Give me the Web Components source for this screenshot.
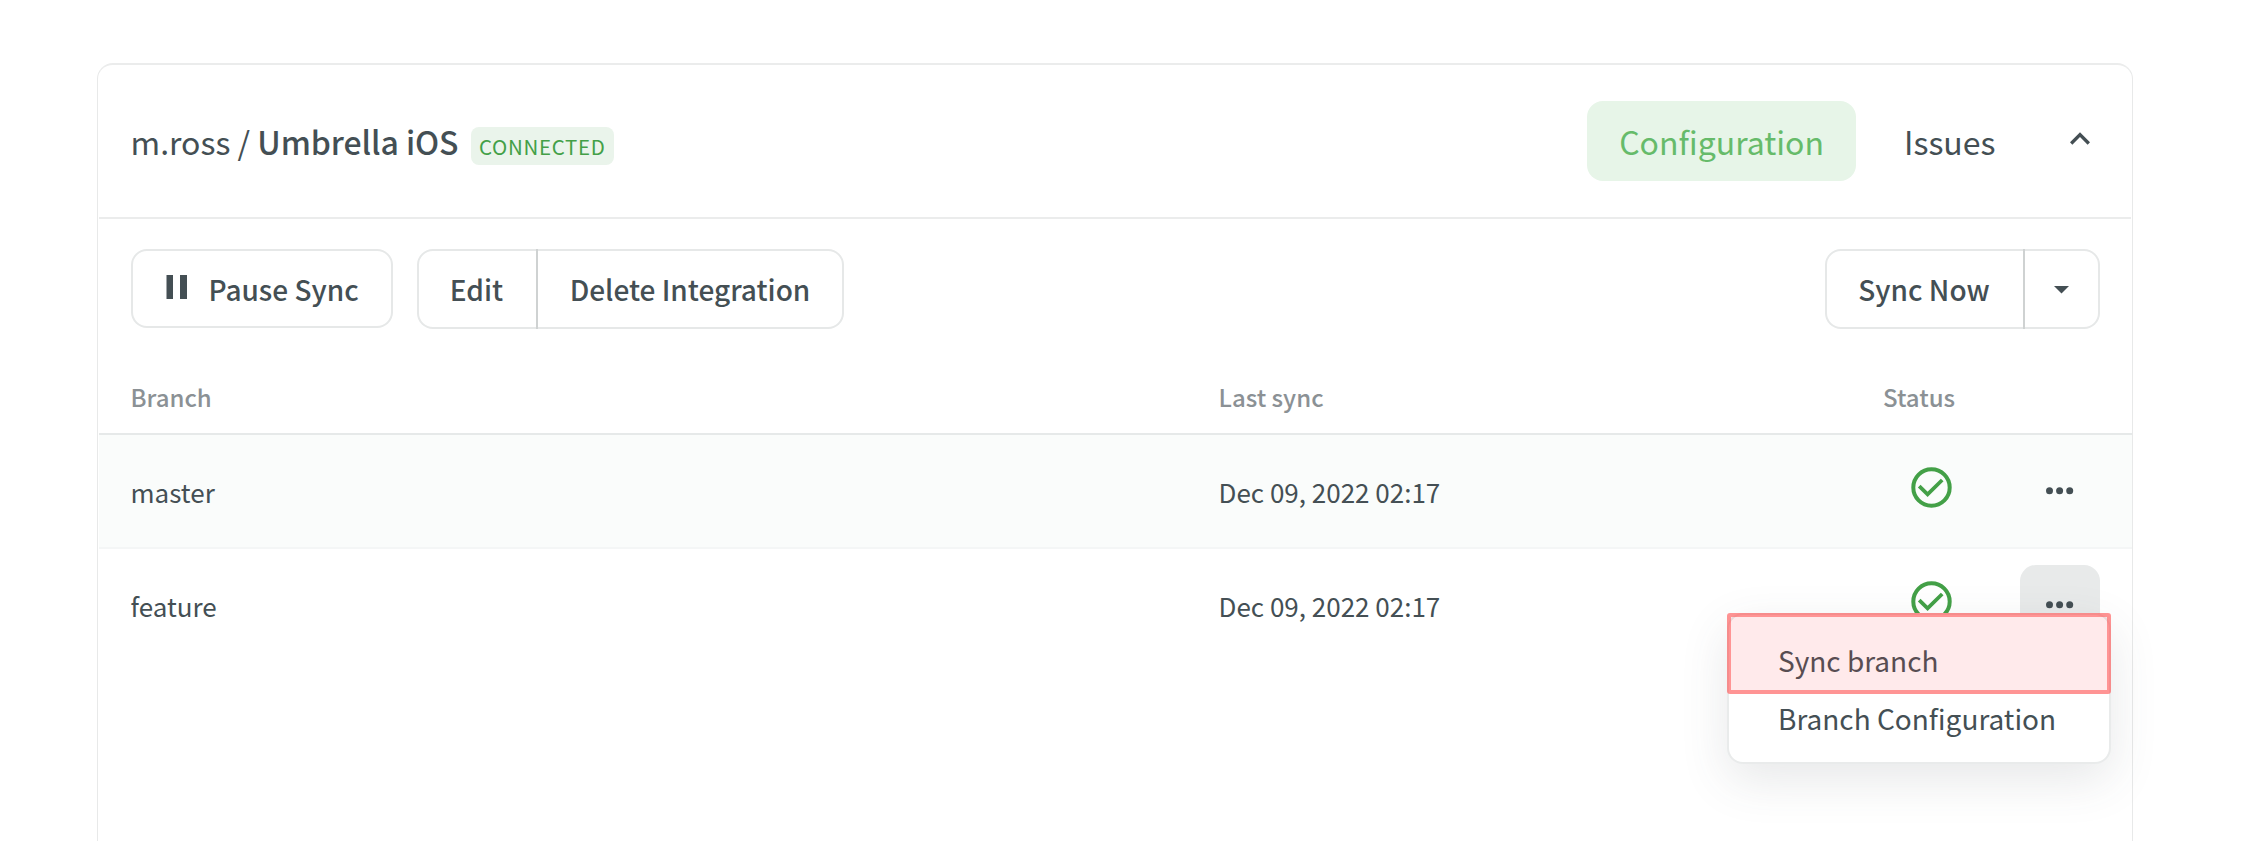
<!DOCTYPE html>
<html lang="en">
<head>
<meta charset="utf-8">
<title>Umbrella iOS integration</title>
<style>
  html, body { margin: 0; height: 841px; overflow: hidden; background: #fff; }
  body {
    font-family: "Noto Sans CJK SC", "Noto Sans", sans-serif;
    color: #444f54;
  }
</style>
</head>
<body>
<integration-card>
  <integration-header slot="header" owner="m.ross" name="Umbrella iOS" status="CONNECTED"></integration-header>
  <integration-toolbar slot="toolbar"></integration-toolbar>
  <branch-table slot="table">
    <branch-row name="master" synced="Dec 09, 2022 02:17" striped></branch-row>
    <branch-row name="feature" synced="Dec 09, 2022 02:17" open>
      <action-menu slot="menu">
        <menu-item highlighted>Sync branch</menu-item>
        <menu-item>Branch Configuration</menu-item>
      </action-menu>
    </branch-row>
  </branch-table>
</integration-card>

<script>
const define = (name, render) => customElements.define(name, class extends HTMLElement {
  constructor() { super(); this.attachShadow({ mode: 'open' }); }
  connectedCallback() { this.shadowRoot.innerHTML = render(this); }
});

define('integration-card', () => `
  <style>
    :host { display: block; padding: 63px 132px 0 97px; }
    .card {
      box-sizing: border-box; height: 778px;
      border: 1px solid #e8e9e9; border-top: 2px solid #ebecec; border-bottom: 0;
      border-radius: 16px 16px 0 0; background: #fff;
    }
  </style>
  <div class="card"><slot name="header"></slot><slot name="toolbar"></slot><slot name="table"></slot></div>`);

define('status-badge', () => `
  <style>
    :host {
      display: block; box-sizing: border-box; height: 38px; width: 143px; padding-left: 8px;
      border-radius: 8px; background: #eaf4eb; color: #43a047;
      font-size: 20.5px; line-height: 38px; letter-spacing: .68px;
    }
  </style><slot></slot>`);

define('tab-link', () => `
  <style>
    :host {
      display: block; box-sizing: border-box; height: 80px; padding: 0 32px;
      border-radius: 16px; font-size: 32px; line-height: 80px; white-space: nowrap;
    }
    :host([active]) { background: #e7f5e8; color: #66bb6a; }
  </style><slot></slot>`);

define('integration-header', el => `
  <style>
    :host {
      display: flex; align-items: center; box-sizing: border-box; height: 154px;
      padding: 0 32.5px 0 31.5px; margin: 0 1px 0 1px; border-bottom: 2px solid #ebecec;
    }
    .title { font-size: 32px; line-height: 48px; white-space: pre; }
    b { font-weight: 500; letter-spacing: -.08px; }
    status-badge { margin: 10px 0 0 12.5px; }
    nav { margin-left: auto; display: flex; align-items: center; gap: 16px; }
    svg { margin: -4px -1px 0 16px; display: block; }
  </style>
  <div class="title">${el.getAttribute('owner')} / <b>${el.getAttribute('name')}</b></div>
  <status-badge>${el.getAttribute('status')}</status-badge>
  <nav>
    <tab-link active>Configuration</tab-link>
    <tab-link>Issues</tab-link>
    <svg width="40" height="40" viewBox="0 0 24 24"><path d="M12 8l-6 6 1.41 1.41L12 10.83l4.59 4.58L18 14z" fill="#444f54"/></svg>
  </nav>`);

define('tool-button', () => `
  <style>
    :host {
      display: flex; align-items: center; box-sizing: border-box; height: 100%;
      font-size: 28px; font-weight: 500; line-height: 42px; white-space: nowrap;
    }
    :host(:not(:first-child)) { border-left: 2px solid #cfd2d2; }
  </style><slot></slot>`);

define('button-group', () => `
  <style>
    :host {
      display: flex; box-sizing: border-box; height: 80px;
      border-radius: 16px; box-shadow: inset 0 0 0 2px #e6e8e8;
    }
  </style><slot></slot>`);

define('integration-toolbar', () => `
  <style>
    :host { display: flex; box-sizing: border-box; height: 142px; padding: 30px 32.5px 32px 32.5px; }
    .pause { width: 262px; height: 79px; margin-right: 24.5px; }
    .pause tool-button { padding-left: 35px; }
    .pause svg { margin: -3px 21px 0 0; }
    .edit { width: 427px; }
    .sync { width: 275px; margin-left: auto; }
    .edit tool-button:first-child { width: 119px; justify-content: center; }
    .edit tool-button:last-child { flex: 1; padding-right: 2px; justify-content: center; }
    .sync tool-button:first-child { width: 198px; padding-left: 1px; justify-content: center; }
    .sync tool-button:last-child { flex: 1; padding: 2px 2px 0 0; justify-content: center; }
  </style>
  <button-group class="pause"><tool-button>
    <svg width="22" height="24" viewBox="0 0 22 24" fill="#444f54"><path d="M.5 0H7V24H.5zM14 0H21V24H14z"/></svg><span>Pause Sync</span>
  </tool-button></button-group>
  <button-group class="edit"><tool-button>Edit</tool-button><tool-button>Delete Integration</tool-button></button-group>
  <button-group class="sync"><tool-button>Sync Now</tool-button><tool-button>
    <svg width="15" height="8" viewBox="0 0 15 8"><path d="M0 0H15L7.5 7.6z" fill="#444f54"/></svg>
  </tool-button></button-group>`);

define('branch-table', () => `
  <style>
    :host { display: block; }
    .head {
      display: grid; grid-template-columns: 1088px 664.5px 1fr; align-items: center;
      box-sizing: border-box; height: 74px; padding: 0 0 0 31.5px; margin-left: 1px;
      border-bottom: 2px solid #e6e9e9;
      color: #8b9195; font-size: 24px; font-weight: 500; line-height: 36px;
    }
  </style>
  <div class="head"><span>Branch</span><span>Last sync</span><span>Status</span></div>
  <slot></slot>`);

define('branch-row', el => `
  <style>
    :host {
      display: grid; grid-template-columns: 1088px 692.5px 109px 80px; align-items: center;
      box-sizing: border-box; height: 114px; padding: 0 0 2px 31.5px; margin-left: 1px;
      position: relative; font-size: 26px; line-height: 38px;
    }
    :host([striped]) { background: #fafcfb; border-bottom: 2px solid #f4f6f6; padding-bottom: 0; }
    span { padding-top: 2px; }
    .check { display: block; margin-top: -8px; }
    .more { display: grid; place-items: center; width: 80px; height: 80px; border-radius: 16px; }
    :host([open]) .more { background: #e8eaea; }
  </style>
  <span>${el.getAttribute('name')}</span>
  <span>${el.getAttribute('synced')}</span>
  <svg class="check" width="41" height="41" viewBox="0 0 41 41" fill="none" stroke="#43a047" stroke-width="4">
    <circle cx="20.5" cy="20.5" r="18.2"/><path d="M8.2 19.2 16.6 27.4 31.2 13" stroke-width="3.8"/>
  </svg>
  <div class="more"><svg width="28" height="8" viewBox="0 0 28 8" fill="#444f54">
    <circle cx="3.5" cy="3.8" r="3.5"/><circle cx="13.6" cy="3.8" r="3.5"/><circle cx="23.7" cy="3.8" r="3.5"/>
  </svg></div>
  <slot name="menu"></slot>`);

define('action-menu', () => `
  <style>
    :host {
      position: absolute; right: 21px; top: 64px; z-index: 1;
      display: block; box-sizing: border-box; width: 384px; height: 151px; padding-top: 16px;
      background: #fff; border: 2px solid #e9ebeb; border-radius: 16px;
      box-shadow: 0 16px 48px rgba(68,79,84,.13);
    }
  </style><slot></slot>`);

define('menu-item', () => `
  <style>
    :host { display: block; padding-left: 49px; font-size: 28px; line-height: 58px; white-space: nowrap; }
    :host([highlighted])::after {
      content: ""; position: absolute; left: -2px; top: -2px; box-sizing: border-box;
      width: 384px; height: 81px; border: 4px solid rgba(255,76,76,.6); border-radius: 3px;
      background: rgba(255,60,70,.11) padding-box;
    }
  </style><slot></slot>`);
</script>
</body>
</html>
